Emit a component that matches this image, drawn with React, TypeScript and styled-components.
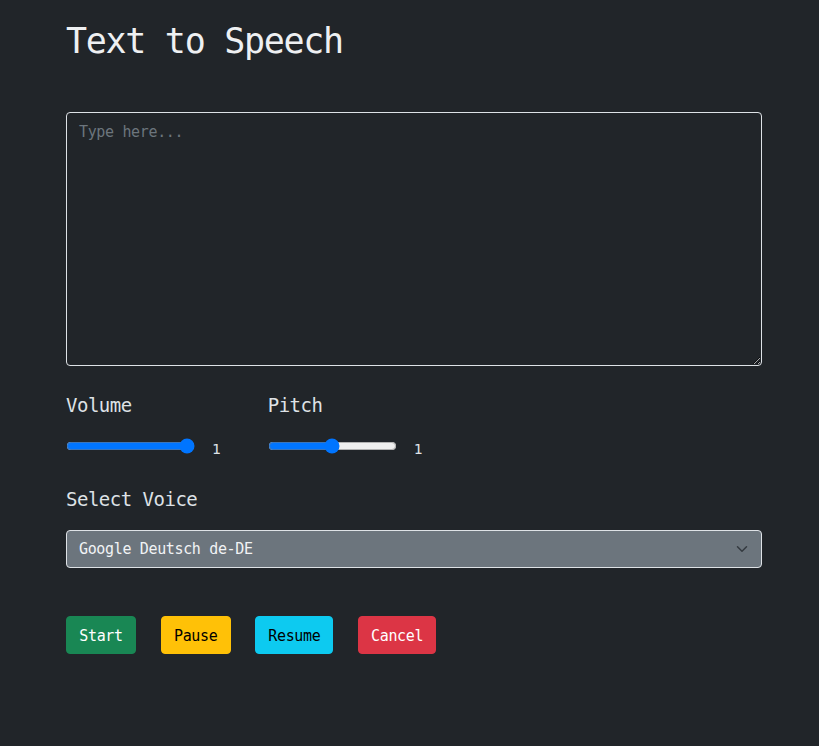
import React, { useState } from "react";
import styled, { createGlobalStyle } from "styled-components";

const mono = `"DejaVu Sans Mono", "Liberation Mono", monospace`;

const Global = createGlobalStyle`
  html, body { margin: 0; padding: 0; background: #212529; }
  body { font-family: ${mono}; color: #dee2e6; }
  * { box-sizing: border-box; }
`;

const Page = styled.div`
  min-height: 746px;
  background: #212529;
  padding: 20px 0 40px 66px;
`;

const Container = styled.div`
  width: 696px;
  display: flex;
  flex-direction: column;
`;

const Title = styled.h1`
  margin: 0 0 50px;
  font-family: ${mono};
  font-weight: 400;
  font-size: 35px;
  line-height: 42px;
  letter-spacing: -1.3px;
  color: #eef0f2;
`;

const TextArea = styled.textarea`
  display: block;
  width: 696px;
  height: 254px;
  margin: 0;
  padding: 7px 12px;
  background: #212529;
  color: #dee2e6;
  border: 1px solid #dee2e6;
  border-radius: 4px;
  font-family: ${mono};
  font-size: 15px;
  letter-spacing: -0.35px;
  line-height: 24px;
  outline: none;
  &::placeholder { color: #6c757d; }
`;

const Label = styled.div`
  font-size: 19px;
  line-height: 23px;
  letter-spacing: -0.5px;
  color: #dee2e6;
`;

const Sliders = styled.div`
  display: flex;
  gap: 47px;
  margin-top: 28px;
`;

const SliderGroup = styled.div`
  display: flex;
  flex-direction: column;
  gap: 21px;
`;

const SliderRow = styled.div`
  display: flex;
  align-items: flex-start;
`;

const Range = styled.input`
  width: 129px;
  height: 16px;
  margin: 0;
`;

const Value = styled.span`
  margin: 3px 0 0 17px;
  font-size: 14.5px;
  line-height: 16px;
  color: #dee2e6;
`;

const VoiceLabel = styled(Label)`
  margin-top: 31px;
`;

const SelectWrap = styled.div`
  position: relative;
  margin-top: 19px;
  width: 696px;
`;

const Select = styled.select`
  appearance: none;
  display: block;
  width: 100%;
  height: 38px;
  padding: 6px 36px 6px 12px;
  background: #6c757d;
  color: #f1f3f5;
  border: 1px solid #dee2e6;
  border-radius: 4px;
  font-family: ${mono};
  font-size: 15px;
  letter-spacing: -0.35px;
  line-height: 24px;
  outline: none;
`;

const Chevron = styled.svg`
  position: absolute;
  right: 13px;
  top: 13px;
  width: 14px;
  height: 12px;
  pointer-events: none;
`;

const Buttons = styled.div`
  display: flex;
  gap: 24.7px;
  margin-top: 48px;
`;

const palette = {
  success: { bg: "#198754", fg: "#ffffff" },
  warning: { bg: "#ffc107", fg: "#000000" },
  info: { bg: "#0dcaf0", fg: "#000000" },
  danger: { bg: "#dc3545", fg: "#ffffff" },
};

const Button = styled.button<{ $variant: keyof typeof palette; $w: number }>`
  width: ${(p) => p.$w}px;
  height: 38px;
  padding: 7px 0 5px;
  border: 1px solid ${(p) => palette[p.$variant].bg};
  border-radius: 4px;
  background: ${(p) => palette[p.$variant].bg};
  color: ${(p) => palette[p.$variant].fg};
  font-family: ${mono};
  font-size: 15px;
  letter-spacing: -0.35px;
  line-height: 24px;
  cursor: pointer;
`;

export default function App() {
  const [text, setText] = useState("");
  const [volume, setVolume] = useState(1);
  const [pitch, setPitch] = useState(1);
  return (
    <Page>
      <Global />
      <Container>
        <Title>Text to Speech</Title>
        <TextArea
          placeholder="Type here..."
          value={text}
          onChange={(e) => setText(e.target.value)}
        />
        <Sliders>
          <SliderGroup>
            <Label>Volume</Label>
            <SliderRow>
              <Range
                type="range"
                min={0}
                max={1}
                step={0.1}
                value={volume}
                onChange={(e) => setVolume(Number(e.target.value))}
              />
              <Value>1</Value>
            </SliderRow>
          </SliderGroup>
          <SliderGroup>
            <Label>Pitch</Label>
            <SliderRow>
              <Range
                type="range"
                min={0}
                max={2}
                step={0.1}
                value={pitch}
                onChange={(e) => setPitch(Number(e.target.value))}
              />
              <Value>1</Value>
            </SliderRow>
          </SliderGroup>
        </Sliders>
        <VoiceLabel>Select Voice</VoiceLabel>
        <SelectWrap>
          <Select defaultValue="de">
            <option value="de">Google Deutsch de-DE</option>
            <option value="en">Google US English en-US</option>
          </Select>
          <Chevron viewBox="0 0 16 16">
            <path
              d="M2 5l6 6 6-6"
              fill="none"
              stroke="#343a40"
              strokeWidth="2"
              strokeLinecap="round"
              strokeLinejoin="round"
            />
          </Chevron>
        </SelectWrap>
        <Buttons>
          <Button $variant="success" $w={70}>Start</Button>
          <Button $variant="warning" $w={70}>Pause</Button>
          <Button $variant="info" $w={78}>Resume</Button>
          <Button $variant="danger" $w={78}>Cancel</Button>
        </Buttons>
      </Container>
    </Page>
  );
}
